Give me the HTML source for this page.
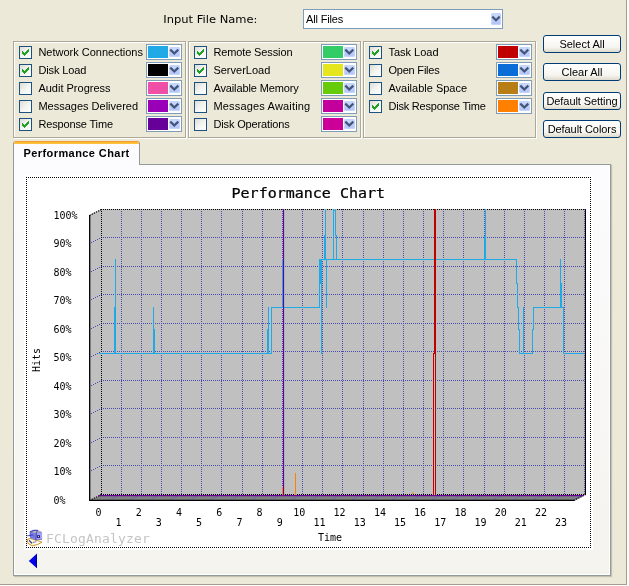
<!DOCTYPE html><html><head><meta charset="utf-8"><title>FCLogAnalyzer</title><style>
html,body{margin:0;padding:0}
body{width:629px;height:586px;background:#ECE9D8;position:relative;overflow:hidden;font-family:"Liberation Sans",sans-serif;font-size:11px;color:#000}
.abs{position:absolute}
.lbl{position:absolute;white-space:nowrap;line-height:13px;height:13px}
.panel{position:absolute;border:1px solid #ACA899;box-shadow:inset 1px 1px 0 #fff, 1px 1px 0 #fff;box-sizing:border-box}
.cb{position:absolute;width:13px;height:13px;box-sizing:border-box;border:1px solid #1C5180;background:linear-gradient(135deg,#DCDCD7 0%,#F3F3EF 50%,#FFFFFF 100%)}
.cb svg{position:absolute;left:0;top:0}
.cc{position:absolute;width:36px;height:16px;box-sizing:border-box;border:1px solid #7F9DB9;background:#fff}
.cc i{position:absolute;left:1px;top:1px;width:20px;height:12px}
.dd{position:absolute;width:12px;height:12px;border-radius:2px;background:linear-gradient(180deg,#CBDAFD 0%,#BCCDF9 60%,#AFC2F5 100%);box-shadow:inset 0 0 0 1px #C5D4FC}
.dd svg{position:absolute;left:0;top:0}
.btn{position:absolute;box-sizing:border-box;border:1px solid #003C74;border-radius:3px;background:linear-gradient(180deg,#FFFFFF 0%,#F6F5F0 70%,#DDD9CB 100%);text-align:center;line-height:16px;height:18px;width:78px;white-space:nowrap}
.mono{font-family:"DejaVu Sans Mono","Liberation Mono",monospace}
</style></head><body><div id="app" style="position:absolute;left:0;top:0;width:629px;height:586px;will-change:transform">
<div class="abs" style="left:626px;top:0;width:1px;height:585px;background:#A29F8C"></div>
<div class="abs" style="left:627px;top:0;width:2px;height:586px;background:#FFFFFF"></div>
<div class="abs" style="left:0;top:584px;width:627px;height:1px;background:#A29F8C"></div>
<div class="abs" style="left:0;top:585px;width:629px;height:1px;background:#FFFFFF"></div>
<div class="lbl" style="left:163.3px;top:12.6px;font-family:'DejaVu Sans',sans-serif;font-size:11.5px;transform:scaleY(0.87);transform-origin:0 10.4px">Input File Name:</div>
<div class="abs" style="left:303px;top:9px;width:200px;height:20px;box-sizing:border-box;border:1px solid #7F9DB9;background:#fff"><div class="lbl" style="left:2px;top:3px;letter-spacing:-0.15px">All Files</div><div class="dd" style="left:187px;top:3px;width:10px;height:12px"><svg width="10" height="12" viewBox="0 0 10 12"><path d="M1.3 3.6 L5 7.3 L8.7 3.6" fill="none" stroke="#42557A" stroke-width="2.2"/></svg></div></div>
<div class="panel" style="left:13px;top:41px;width:173px;height:97px"></div>
<div class="cb" style="left:19px;top:46px"><svg width="11" height="11" viewBox="0 0 11 11" shape-rendering="crispEdges"><path d="M2 4h1v3h-1zM3 5h1v3h-1zM4 6h1v3h-1zM5 5h1v3h-1zM6 4h1v3h-1zM7 3h1v3h-1zM8 2h1v3h-1z" fill="#21A121"/></svg></div>
<div class="lbl" style="left:38.4px;top:46px;letter-spacing:0px">Network Connections</div>
<div class="cc" style="left:146px;top:44px"><i style="background:#1FA9E6"></i><div class="dd" style="left:22px;top:2px;width:10.5px;height:10px"><svg width="11" height="10" viewBox="0 0 11 10"><path d="M1.3 2.6 L5.3 6.5 L9.3 2.6" fill="none" stroke="#42557A" stroke-width="2.3"/></svg></div></div>
<div class="cb" style="left:19px;top:64px"><svg width="11" height="11" viewBox="0 0 11 11" shape-rendering="crispEdges"><path d="M2 4h1v3h-1zM3 5h1v3h-1zM4 6h1v3h-1zM5 5h1v3h-1zM6 4h1v3h-1zM7 3h1v3h-1zM8 2h1v3h-1z" fill="#21A121"/></svg></div>
<div class="lbl" style="left:38.4px;top:64px;letter-spacing:-0.13px">Disk Load</div>
<div class="cc" style="left:146px;top:62px"><i style="background:#000000"></i><div class="dd" style="left:22px;top:2px;width:10.5px;height:10px"><svg width="11" height="10" viewBox="0 0 11 10"><path d="M1.3 2.6 L5.3 6.5 L9.3 2.6" fill="none" stroke="#42557A" stroke-width="2.3"/></svg></div></div>
<div class="cb" style="left:19px;top:82px"></div>
<div class="lbl" style="left:38.4px;top:82px;letter-spacing:0px">Audit Progress</div>
<div class="cc" style="left:146px;top:80px"><i style="background:#F04FA7"></i><div class="dd" style="left:22px;top:2px;width:10.5px;height:10px"><svg width="11" height="10" viewBox="0 0 11 10"><path d="M1.3 2.6 L5.3 6.5 L9.3 2.6" fill="none" stroke="#42557A" stroke-width="2.3"/></svg></div></div>
<div class="cb" style="left:19px;top:100px"></div>
<div class="lbl" style="left:38.4px;top:100px;letter-spacing:0px">Messages Delivered</div>
<div class="cc" style="left:146px;top:98px"><i style="background:#9900B8"></i><div class="dd" style="left:22px;top:2px;width:10.5px;height:10px"><svg width="11" height="10" viewBox="0 0 11 10"><path d="M1.3 2.6 L5.3 6.5 L9.3 2.6" fill="none" stroke="#42557A" stroke-width="2.3"/></svg></div></div>
<div class="cb" style="left:19px;top:118px"><svg width="11" height="11" viewBox="0 0 11 11" shape-rendering="crispEdges"><path d="M2 4h1v3h-1zM3 5h1v3h-1zM4 6h1v3h-1zM5 5h1v3h-1zM6 4h1v3h-1zM7 3h1v3h-1zM8 2h1v3h-1z" fill="#21A121"/></svg></div>
<div class="lbl" style="left:38.4px;top:118px;letter-spacing:-0.15px">Response Time</div>
<div class="cc" style="left:146px;top:116px"><i style="background:#660099"></i><div class="dd" style="left:22px;top:2px;width:10.5px;height:10px"><svg width="11" height="10" viewBox="0 0 11 10"><path d="M1.3 2.6 L5.3 6.5 L9.3 2.6" fill="none" stroke="#42557A" stroke-width="2.3"/></svg></div></div>
<div class="panel" style="left:188px;top:41px;width:173px;height:97px"></div>
<div class="cb" style="left:194px;top:46px"><svg width="11" height="11" viewBox="0 0 11 11" shape-rendering="crispEdges"><path d="M2 4h1v3h-1zM3 5h1v3h-1zM4 6h1v3h-1zM5 5h1v3h-1zM6 4h1v3h-1zM7 3h1v3h-1zM8 2h1v3h-1z" fill="#21A121"/></svg></div>
<div class="lbl" style="left:213.4px;top:46px;letter-spacing:-0.12px">Remote Session</div>
<div class="cc" style="left:321px;top:44px"><i style="background:#33CC66"></i><div class="dd" style="left:22px;top:2px;width:10.5px;height:10px"><svg width="11" height="10" viewBox="0 0 11 10"><path d="M1.3 2.6 L5.3 6.5 L9.3 2.6" fill="none" stroke="#42557A" stroke-width="2.3"/></svg></div></div>
<div class="cb" style="left:194px;top:64px"><svg width="11" height="11" viewBox="0 0 11 11" shape-rendering="crispEdges"><path d="M2 4h1v3h-1zM3 5h1v3h-1zM4 6h1v3h-1zM5 5h1v3h-1zM6 4h1v3h-1zM7 3h1v3h-1zM8 2h1v3h-1z" fill="#21A121"/></svg></div>
<div class="lbl" style="left:213.4px;top:64px;letter-spacing:0px">ServerLoad</div>
<div class="cc" style="left:321px;top:62px"><i style="background:#E6E61E"></i><div class="dd" style="left:22px;top:2px;width:10.5px;height:10px"><svg width="11" height="10" viewBox="0 0 11 10"><path d="M1.3 2.6 L5.3 6.5 L9.3 2.6" fill="none" stroke="#42557A" stroke-width="2.3"/></svg></div></div>
<div class="cb" style="left:194px;top:82px"></div>
<div class="lbl" style="left:213.4px;top:82px;letter-spacing:-0.125px">Available Memory</div>
<div class="cc" style="left:321px;top:80px"><i style="background:#66CC0A"></i><div class="dd" style="left:22px;top:2px;width:10.5px;height:10px"><svg width="11" height="10" viewBox="0 0 11 10"><path d="M1.3 2.6 L5.3 6.5 L9.3 2.6" fill="none" stroke="#42557A" stroke-width="2.3"/></svg></div></div>
<div class="cb" style="left:194px;top:100px"></div>
<div class="lbl" style="left:213.4px;top:100px;letter-spacing:0.18px">Messages Awaiting</div>
<div class="cc" style="left:321px;top:98px"><i style="background:#C4009C"></i><div class="dd" style="left:22px;top:2px;width:10.5px;height:10px"><svg width="11" height="10" viewBox="0 0 11 10"><path d="M1.3 2.6 L5.3 6.5 L9.3 2.6" fill="none" stroke="#42557A" stroke-width="2.3"/></svg></div></div>
<div class="cb" style="left:194px;top:118px"></div>
<div class="lbl" style="left:213.4px;top:118px;letter-spacing:-0.13px">Disk Operations</div>
<div class="cc" style="left:321px;top:116px"><i style="background:#CC0099"></i><div class="dd" style="left:22px;top:2px;width:10.5px;height:10px"><svg width="11" height="10" viewBox="0 0 11 10"><path d="M1.3 2.6 L5.3 6.5 L9.3 2.6" fill="none" stroke="#42557A" stroke-width="2.3"/></svg></div></div>
<div class="panel" style="left:363px;top:41px;width:173px;height:97px"></div>
<div class="cb" style="left:369px;top:46px"><svg width="11" height="11" viewBox="0 0 11 11" shape-rendering="crispEdges"><path d="M2 4h1v3h-1zM3 5h1v3h-1zM4 6h1v3h-1zM5 5h1v3h-1zM6 4h1v3h-1zM7 3h1v3h-1zM8 2h1v3h-1z" fill="#21A121"/></svg></div>
<div class="lbl" style="left:388.4px;top:46px;letter-spacing:0px">Task Load</div>
<div class="cc" style="left:496px;top:44px"><i style="background:#C00000"></i><div class="dd" style="left:22px;top:2px;width:10.5px;height:10px"><svg width="11" height="10" viewBox="0 0 11 10"><path d="M1.3 2.6 L5.3 6.5 L9.3 2.6" fill="none" stroke="#42557A" stroke-width="2.3"/></svg></div></div>
<div class="cb" style="left:369px;top:64px"></div>
<div class="lbl" style="left:388.4px;top:64px;letter-spacing:-0.2px">Open Files</div>
<div class="cc" style="left:496px;top:62px"><i style="background:#0A6CD6"></i><div class="dd" style="left:22px;top:2px;width:10.5px;height:10px"><svg width="11" height="10" viewBox="0 0 11 10"><path d="M1.3 2.6 L5.3 6.5 L9.3 2.6" fill="none" stroke="#42557A" stroke-width="2.3"/></svg></div></div>
<div class="cb" style="left:369px;top:82px"></div>
<div class="lbl" style="left:388.4px;top:82px;letter-spacing:0px">Available Space</div>
<div class="cc" style="left:496px;top:80px"><i style="background:#B87D14"></i><div class="dd" style="left:22px;top:2px;width:10.5px;height:10px"><svg width="11" height="10" viewBox="0 0 11 10"><path d="M1.3 2.6 L5.3 6.5 L9.3 2.6" fill="none" stroke="#42557A" stroke-width="2.3"/></svg></div></div>
<div class="cb" style="left:369px;top:100px"><svg width="11" height="11" viewBox="0 0 11 11" shape-rendering="crispEdges"><path d="M2 4h1v3h-1zM3 5h1v3h-1zM4 6h1v3h-1zM5 5h1v3h-1zM6 4h1v3h-1zM7 3h1v3h-1zM8 2h1v3h-1z" fill="#21A121"/></svg></div>
<div class="lbl" style="left:388.4px;top:100px;letter-spacing:-0.2px">Disk Response Time</div>
<div class="cc" style="left:496px;top:98px"><i style="background:#FF8000"></i><div class="dd" style="left:22px;top:2px;width:10.5px;height:10px"><svg width="11" height="10" viewBox="0 0 11 10"><path d="M1.3 2.6 L5.3 6.5 L9.3 2.6" fill="none" stroke="#42557A" stroke-width="2.3"/></svg></div></div>
<div class="btn" style="left:543px;top:35px;letter-spacing:0px">Select All</div>
<div class="btn" style="left:543px;top:63px;letter-spacing:0px">Clear All</div>
<div class="btn" style="left:543px;top:92px;letter-spacing:-0.07px">Default Setting</div>
<div class="btn" style="left:543px;top:120px;letter-spacing:-0.07px">Default Colors</div>
<div class="abs" style="left:13px;top:164px;width:598px;height:412px;box-sizing:border-box;border:1px solid #919B9C;background:linear-gradient(180deg,#FCFCFE 0%,#F4F3EE 100%);box-shadow:inset -1px -1px 0 #FFFFFF, inset 1px 0 0 #FFFFFF, 1px 1px 1px rgba(120,120,100,0.35)"></div>
<div class="abs" style="left:13px;top:141px;width:127px;height:24px;box-sizing:border-box;border:1px solid #919B9C;border-bottom:none;border-top:none;border-radius:3px 3px 0 0;background:#FCFCFE;overflow:hidden"><div class="abs" style="left:-1px;top:0;width:127px;height:3px;background:linear-gradient(180deg,#E68B2C 0%,#FFB634 40%,#FFC73C 100%)"></div><div class="lbl" style="left:9.5px;top:6px;font-weight:bold;letter-spacing:0.42px">Performance Chart</div></div>
<div class="abs" style="left:24px;top:175px;width:569px;height:375px;background:#fff"></div>
<div class="abs" style="left:26px;top:177px;width:565px;height:371px;box-sizing:border-box;border:1px dotted #000"></div>
<svg class="abs" style="left:0;top:0" width="629" height="586" viewBox="0 0 629 586">
<g shape-rendering="crispEdges">
<polygon points="101,209 89,215 89,501 101,495" fill="#C0C0C0"/>
<rect x="101" y="209" width="484" height="286" fill="#C0C0C0"/>
</g>
<polygon points="101,495 585,495 574,501 89,501" fill="#808080"/>
<g shape-rendering="crispEdges" stroke="#4C4CB0" stroke-width="1" stroke-dasharray="1 1">
<line x1="121.5" y1="209" x2="121.5" y2="495"/>
<line x1="141.5" y1="209" x2="141.5" y2="495"/>
<line x1="161.5" y1="209" x2="161.5" y2="495"/>
<line x1="181.5" y1="209" x2="181.5" y2="495"/>
<line x1="201.5" y1="209" x2="201.5" y2="495"/>
<line x1="221.5" y1="209" x2="221.5" y2="495"/>
<line x1="242.5" y1="209" x2="242.5" y2="495"/>
<line x1="262.5" y1="209" x2="262.5" y2="495"/>
<line x1="282.5" y1="209" x2="282.5" y2="495"/>
<line x1="302.5" y1="209" x2="302.5" y2="495"/>
<line x1="322.5" y1="209" x2="322.5" y2="495"/>
<line x1="342.5" y1="209" x2="342.5" y2="495"/>
<line x1="363.5" y1="209" x2="363.5" y2="495"/>
<line x1="383.5" y1="209" x2="383.5" y2="495"/>
<line x1="403.5" y1="209" x2="403.5" y2="495"/>
<line x1="423.5" y1="209" x2="423.5" y2="495"/>
<line x1="443.5" y1="209" x2="443.5" y2="495"/>
<line x1="463.5" y1="209" x2="463.5" y2="495"/>
<line x1="484.5" y1="209" x2="484.5" y2="495"/>
<line x1="504.5" y1="209" x2="504.5" y2="495"/>
<line x1="524.5" y1="209" x2="524.5" y2="495"/>
<line x1="544.5" y1="209" x2="544.5" y2="495"/>
<line x1="564.5" y1="209" x2="564.5" y2="495"/>
<line x1="584.5" y1="209" x2="584.5" y2="495"/>
<line x1="101" y1="209.5" x2="585" y2="209.5"/>
<line x1="101" y1="237.5" x2="585" y2="237.5"/>
<line x1="101" y1="266.5" x2="585" y2="266.5"/>
<line x1="101" y1="294.5" x2="585" y2="294.5"/>
<line x1="101" y1="323.5" x2="585" y2="323.5"/>
<line x1="101" y1="351.5" x2="585" y2="351.5"/>
<line x1="101" y1="380.5" x2="585" y2="380.5"/>
<line x1="101" y1="408.5" x2="585" y2="408.5"/>
<line x1="101" y1="437.5" x2="585" y2="437.5"/>
<line x1="101" y1="465.5" x2="585" y2="465.5"/>
</g>
<path d="M99 238h1v1h-1zM97 239h1v1h-1zM95 240h1v1h-1zM93 241h1v1h-1zM91 242h1v1h-1zM99 267h1v1h-1zM97 268h1v1h-1zM95 269h1v1h-1zM93 270h1v1h-1zM91 271h1v1h-1zM99 295h1v1h-1zM97 296h1v1h-1zM95 297h1v1h-1zM93 298h1v1h-1zM91 299h1v1h-1zM99 324h1v1h-1zM97 325h1v1h-1zM95 326h1v1h-1zM93 327h1v1h-1zM91 328h1v1h-1zM99 352h1v1h-1zM97 353h1v1h-1zM95 354h1v1h-1zM93 355h1v1h-1zM91 356h1v1h-1zM99 381h1v1h-1zM97 382h1v1h-1zM95 383h1v1h-1zM93 384h1v1h-1zM91 385h1v1h-1zM99 409h1v1h-1zM97 410h1v1h-1zM95 411h1v1h-1zM93 412h1v1h-1zM91 413h1v1h-1zM99 438h1v1h-1zM97 439h1v1h-1zM95 440h1v1h-1zM93 441h1v1h-1zM91 442h1v1h-1zM99 466h1v1h-1zM97 467h1v1h-1zM95 468h1v1h-1zM93 469h1v1h-1zM91 470h1v1h-1z" fill="#4C4CB0" shape-rendering="crispEdges"/>
<path d="M116 496h1v1h-1zM114 497h1v1h-1zM112 498h1v1h-1zM110 499h1v1h-1zM136 496h1v1h-1zM134 497h1v1h-1zM132 498h1v1h-1zM130 499h1v1h-1zM156 496h1v1h-1zM154 497h1v1h-1zM152 498h1v1h-1zM150 499h1v1h-1zM176 496h1v1h-1zM174 497h1v1h-1zM172 498h1v1h-1zM170 499h1v1h-1zM196 496h1v1h-1zM194 497h1v1h-1zM192 498h1v1h-1zM190 499h1v1h-1zM216 496h1v1h-1zM214 497h1v1h-1zM212 498h1v1h-1zM210 499h1v1h-1zM237 496h1v1h-1zM235 497h1v1h-1zM233 498h1v1h-1zM231 499h1v1h-1zM257 496h1v1h-1zM255 497h1v1h-1zM253 498h1v1h-1zM251 499h1v1h-1zM277 496h1v1h-1zM275 497h1v1h-1zM273 498h1v1h-1zM271 499h1v1h-1zM297 496h1v1h-1zM295 497h1v1h-1zM293 498h1v1h-1zM291 499h1v1h-1zM317 496h1v1h-1zM315 497h1v1h-1zM313 498h1v1h-1zM311 499h1v1h-1zM337 496h1v1h-1zM335 497h1v1h-1zM333 498h1v1h-1zM331 499h1v1h-1zM358 496h1v1h-1zM356 497h1v1h-1zM354 498h1v1h-1zM352 499h1v1h-1zM378 496h1v1h-1zM376 497h1v1h-1zM374 498h1v1h-1zM372 499h1v1h-1zM398 496h1v1h-1zM396 497h1v1h-1zM394 498h1v1h-1zM392 499h1v1h-1zM418 496h1v1h-1zM416 497h1v1h-1zM414 498h1v1h-1zM412 499h1v1h-1zM438 496h1v1h-1zM436 497h1v1h-1zM434 498h1v1h-1zM432 499h1v1h-1zM458 496h1v1h-1zM456 497h1v1h-1zM454 498h1v1h-1zM452 499h1v1h-1zM479 496h1v1h-1zM477 497h1v1h-1zM475 498h1v1h-1zM473 499h1v1h-1zM499 496h1v1h-1zM497 497h1v1h-1zM495 498h1v1h-1zM493 499h1v1h-1zM519 496h1v1h-1zM517 497h1v1h-1zM515 498h1v1h-1zM513 499h1v1h-1zM539 496h1v1h-1zM537 497h1v1h-1zM535 498h1v1h-1zM533 499h1v1h-1zM559 496h1v1h-1zM557 497h1v1h-1zM555 498h1v1h-1zM553 499h1v1h-1zM579 496h1v1h-1zM577 497h1v1h-1zM575 498h1v1h-1zM573 499h1v1h-1z" fill="#5A5AC8" shape-rendering="crispEdges"/>
<g shape-rendering="crispEdges" stroke="#000" stroke-width="1">
<line x1="101" y1="209.5" x2="585" y2="209.5" stroke-dasharray="1 1"/>
<line x1="101.5" y1="209" x2="101.5" y2="495" stroke-dasharray="1 1"/>
<line x1="101" y1="494.5" x2="585" y2="494.5" stroke-dasharray="1 1"/>
<line x1="585.5" y1="209" x2="585.5" y2="495"/>
</g>
<line x1="89.7" y1="215" x2="89.7" y2="501" stroke="#000" stroke-width="1.3"/>
<line x1="89" y1="500.4" x2="574" y2="500.4" stroke="#000" stroke-width="1.3"/>
<line x1="574" y1="500.5" x2="585.5" y2="494.5" stroke="#000" stroke-width="1.2" stroke-dasharray="1.2 1.2"/>
<line x1="89.5" y1="215.5" x2="101.5" y2="209.5" stroke="#000" stroke-width="1.2" stroke-dasharray="1.2 1.2"/>
<line x1="89.5" y1="500.5" x2="101.5" y2="494.5" stroke="#000" stroke-width="1.2" stroke-dasharray="1.2 1.2"/>
<line x1="98.7" y1="495.6" x2="583.5" y2="495.6" stroke="#660099" stroke-width="1.3"/>
<path d="M99 353H272V354H99ZM114 307H115V354H114ZM115 259H116V354H115ZM153 307H154V354H153ZM154 329H155V354H154ZM267 329H268V354H267ZM268 307H269V354H268ZM271 307H272V354H271ZM271 307H320V308H271ZM282 259H283V308H282ZM319 259H320V308H319ZM320 259H321V284H320ZM321 259H322V354H321ZM319 259H517V260H319ZM325 209H326V260H325ZM324 235H325V260H324ZM326 259H327V308H326ZM333 209H334V260H333ZM333 210H336V211H333ZM335 209H336V236H335ZM336 235H337V260H336ZM485 209H486V260H485ZM484 236H485V260H484ZM516 259H517V284H516ZM517 283H518V308H517ZM518 307H519V330H518ZM519 329H520V354H519ZM519 353H533V354H519ZM523 307H524V354H523ZM532 329H533V354H532ZM533 307H534V330H533ZM533 307H564V308H533ZM560 259H561V308H560ZM561 283H562V308H561ZM563 307H564V354H563ZM563 353H584V354H563Z" fill="#1FA9E6" shape-rendering="crispEdges"/>
<rect x="283" y="209" width="1.1" height="286" fill="#660099"/>
<rect x="434" y="209" width="2" height="145" fill="#C00000"/>
<rect x="433" y="353" width="1" height="142" fill="#C00000"/>
<rect x="435" y="353" width="1" height="142" fill="#C00000"/>
<rect x="295" y="473" width="1" height="22" fill="#FF8000"/>
<rect x="282" y="487" width="1" height="8" fill="#FF8000"/>
<rect x="412" y="492.5" width="1.5" height="1.5" fill="#FF8000"/>
<g class="mono" font-family="DejaVu Sans Mono, Liberation Mono, monospace" fill="#000">
<text x="0" y="0" font-size="13.7" text-anchor="middle" transform="translate(308.3,198) scale(1.096,1)" stroke="#000" stroke-width="0.25">Performance Chart</text>
<text x="53.4" y="503.5" font-size="10">0%</text>
<text x="53.4" y="475.1" font-size="10">10%</text>
<text x="53.4" y="446.6" font-size="10">20%</text>
<text x="53.4" y="418.1" font-size="10">30%</text>
<text x="53.4" y="389.7" font-size="10">40%</text>
<text x="53.4" y="361.2" font-size="10">50%</text>
<text x="53.4" y="332.8" font-size="10">60%</text>
<text x="53.4" y="304.4" font-size="10">70%</text>
<text x="53.4" y="275.9" font-size="10">80%</text>
<text x="53.4" y="247.4" font-size="10">90%</text>
<text x="53.4" y="219.0" font-size="10">100%</text>
<text x="98.4" y="516" font-size="10" text-anchor="middle">0</text>
<text x="118.5" y="526" font-size="10" text-anchor="middle">1</text>
<text x="138.7" y="516" font-size="10" text-anchor="middle">2</text>
<text x="158.8" y="526" font-size="10" text-anchor="middle">3</text>
<text x="179.0" y="516" font-size="10" text-anchor="middle">4</text>
<text x="199.1" y="526" font-size="10" text-anchor="middle">5</text>
<text x="219.2" y="516" font-size="10" text-anchor="middle">6</text>
<text x="239.4" y="526" font-size="10" text-anchor="middle">7</text>
<text x="259.5" y="516" font-size="10" text-anchor="middle">8</text>
<text x="279.7" y="526" font-size="10" text-anchor="middle">9</text>
<text x="299.3" y="516" font-size="10" text-anchor="middle">10</text>
<text x="319.4" y="526" font-size="10" text-anchor="middle">11</text>
<text x="339.6" y="516" font-size="10" text-anchor="middle">12</text>
<text x="359.7" y="526" font-size="10" text-anchor="middle">13</text>
<text x="379.9" y="516" font-size="10" text-anchor="middle">14</text>
<text x="400.0" y="526" font-size="10" text-anchor="middle">15</text>
<text x="420.1" y="516" font-size="10" text-anchor="middle">16</text>
<text x="440.3" y="526" font-size="10" text-anchor="middle">17</text>
<text x="460.4" y="516" font-size="10" text-anchor="middle">18</text>
<text x="480.6" y="526" font-size="10" text-anchor="middle">19</text>
<text x="500.7" y="516" font-size="10" text-anchor="middle">20</text>
<text x="520.8" y="526" font-size="10" text-anchor="middle">21</text>
<text x="541.0" y="516" font-size="10" text-anchor="middle">22</text>
<text x="561.1" y="526" font-size="10" text-anchor="middle">23</text>
<text x="330" y="541" font-size="10" text-anchor="middle">Time</text>
<text x="40" y="360" font-size="10" text-anchor="middle" transform="rotate(-90 40 360)">Hits</text>
<text x="46" y="543" font-size="13" fill="#C4C4C4" letter-spacing="0.17">FCLogAnalyzer</text>
</g>
<g transform="translate(24,526) scale(0.041)"><polygon points="75,335 150,300 440,395 335,450 205,485 100,425" fill="#FFF6D2" stroke="#CC8414" stroke-width="22" stroke-linejoin="round"/><polygon points="210,400 330,370 400,395 300,430" fill="#FFFFFF"/><line x1="125" y1="350" x2="195" y2="425" stroke="#1A2EA0" stroke-width="30"/><line x1="215" y1="400" x2="300" y2="385" stroke="#303890" stroke-width="16"/><polygon points="150,135 235,100 330,100 440,150 440,330 290,350 170,300 150,240" fill="#7C7CE4"/><polygon points="290,190 440,150 440,330 290,350" fill="#A4A4F6"/><polygon points="200,150 250,118 340,112 415,140 300,185" fill="#B4B4B8"/><polyline points="150,140 230,105 330,100 300,185 290,345" fill="none" stroke="#2626A8" stroke-width="18"/><polyline points="150,135 150,240 175,300" fill="none" stroke="#3030B0" stroke-width="16"/><path d="M80 240 L150 232 L200 215 L235 245" fill="none" stroke="#2A2AB0" stroke-width="20"/><rect x="315" y="225" width="76" height="66" fill="#1A1AA0"/><rect x="338" y="246" width="28" height="26" fill="#FFD020"/><line x1="300" y1="340" x2="440" y2="325" stroke="#6060A0" stroke-width="14"/></g>
<polygon points="28.8,561 37,553.6 37,568.2" fill="#0000E6"/><rect x="36" y="554.5" width="1" height="13" fill="#000090"/>
</svg>
</div></body></html>
